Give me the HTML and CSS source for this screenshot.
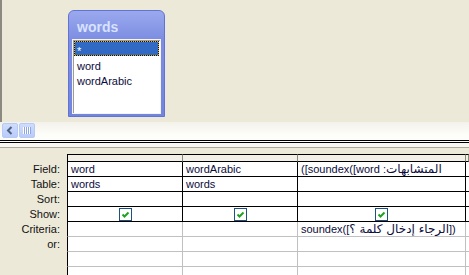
FILE: index.html
```html
<!DOCTYPE html>
<html lang="en">
<head>
  <meta charset="UTF-8" />
  <title>Query Design</title>
  <link rel="stylesheet" href="styles.css">
</head>
<body>

  <div class="tables">
    <div class="fieldlist">
      <div class="fl-title">words</div>
      <ul class="fl-items">
        <li class="sel"><span>*</span></li>
        <li>word</li>
        <li>wordArabic</li>
      </ul>
    </div>
  </div>

  <div class="hscroll">
    <span class="sb-btn">
      <svg width="16" height="15" viewBox="0 0 16 15"><path d="M9.5 4 L6 7.5 L9.5 11" fill="none" stroke="#4d6185" stroke-width="2"/></svg>
    </span>
    <span class="sb-btn">
      <svg width="16" height="15" viewBox="0 0 16 15">
        <path d="M4.5 4v7M6.5 4v7M8.5 4v7M10.5 4v7" stroke="#fff" stroke-width="1"/>
        <path d="M5.5 4v7M7.5 4v7M9.5 4v7M11.5 4v7" stroke="#8da4e6" stroke-width="1"/>
      </svg>
    </span>
  </div>

  <div class="splitter"></div>

  <div class="qbe">
    <div class="lbl"></div>
    <div class="hd first"></div><div class="hd"></div><div class="hd"></div><div class="hd"></div>

    <div class="lbl">Field:</div>
    <div class="c first">word</div><div class="c">wordArabic</div><div class="c">([soundex([word :<span class="ar">المتشابهات</span></div><div class="c"></div>

    <div class="lbl">Table:</div>
    <div class="c first">words</div><div class="c">words</div><div class="c"></div><div class="c"></div>

    <div class="lbl">Sort:</div>
    <div class="c first"></div><div class="c"></div><div class="c"></div><div class="c"></div>

    <div class="lbl">Show:</div>
    <div class="c first chk"><i class="box"></i></div><div class="c chk"><i class="box"></i></div><div class="c chk"><i class="box"></i></div><div class="c"></div>

    <div class="lbl">Criteria:</div>
    <div class="c first soft"></div><div class="c soft"></div><div class="c soft">soundex([<span class="ar">الرجاء إدخال كلمة ؟</span>])</div><div class="c soft"></div>

    <div class="lbl">or:</div>
    <div class="c first soft"></div><div class="c soft"></div><div class="c soft"></div><div class="c soft"></div>

    <div class="lbl"></div>
    <div class="c first soft"></div><div class="c soft"></div><div class="c soft"></div><div class="c soft"></div>

    <div class="lbl"></div>
    <div class="c first soft"></div><div class="c soft"></div><div class="c soft"></div><div class="c soft"></div>
  </div>

</body>
</html>
```

FILE: styles.css
```css
body {
  margin: 0;
  background: #ece9d8;
  font-family: 'Liberation Sans', 'DejaVu Sans', sans-serif;
  font-size: 11px;
  overflow: hidden;
}
.tables {
  position: relative;
  height: 122px;
  border-left: 2px solid #8c8a80;
  box-sizing: border-box;
}
.fieldlist {
  position: absolute;
  left: 66px;
  top: 10px;
  width: 97px;
  height: 107px;
  box-sizing: border-box;
  padding: 8px 3px 2px 3px;
  border: 1px solid #6173d6;
  border-radius: 6px 6px 0 0;
  background: linear-gradient(#9aa9ee, #7d8ee2 28px, #7384dd);
}
.fl-title {
  padding-left: 5px;
  font-weight: bold;
  font-size: 14px;
  line-height: 16px;
  color: #d7e2ff;
  margin-bottom: 4px;
}
.fl-items {
  list-style: none;
  margin: 0;
  padding: 1px;
  height: 75px;
  box-sizing: border-box;
  background: #fff;
  border: 1px solid #f4f4f4;
  box-shadow: inset 1px 1px 0 #9c9c9c;
}
.fl-items li {
  height: 15px;
  box-sizing: border-box;
  padding: 4px 0 0 3px;
  line-height: 12px;
  color: #0c0c3c;
}
.fl-items li.sel {
  padding: 3px 0 0 2px;
  color: #fff;
  border: 1px dotted #111;
  background: linear-gradient(#316ac5, #316ac5) padding-box, #e6b028 border-box;
}
.hscroll {
  height: 18px;
  box-sizing: border-box;
  padding: 1px 2px;
  display: flex;
  gap: 1px;
  background: linear-gradient(#f3f1ea, #fcfcf8 60%, #fefefb);
}
.sb-btn {
  width: 16px;
  height: 15px;
  box-sizing: border-box;
  border: 1px solid #b7c9f5;
  border-radius: 2px;
  background: linear-gradient(#cfdcfc, #b9cbf8);
  display: flex;
}
.sb-btn svg {
  margin: -1px;
}
.splitter {
  height: 14px;
  border-top: 1px solid #000;
  box-sizing: border-box;
  background: linear-gradient(#fff 0 1px, #000 1px 2px, #f7f6f0 2px 6px, #aca899 6px 7px, #ece9d8 7px);
}
.qbe {
  display: grid;
  grid-template-columns: 67px 116px 115px 168px 3px;
}
.lbl {
  text-align: right;
  padding-right: 7px;
  line-height: 14px;
  color: #111;
}
.hd {
  height: 8px;
  box-sizing: border-box;
  background: #f2f0e6;
  border-top: 1px solid #000;
  border-bottom: 1px solid #000;
  border-right: 1px solid #8a8878;
}
.c {
  height: 15px;
  box-sizing: border-box;
  padding-left: 3px;
  line-height: 14px;
  white-space: nowrap;
  overflow: hidden;
  color: #0c0c3c;
  background: #fff;
  border-right: 1px solid #000;
  border-bottom: 1px solid #000;
}
.ar {
  font-family: 'DejaVu Sans', sans-serif;
  font-size: 12px;
  line-height: 13px;
}
.first {
  border-left: 1px solid #000;
}
.c.soft {
  border-bottom-color: #c0c0c0;
  border-right-color: #c0c0c0;
}
.c.first.soft {
  border-left-color: #000;
}
.chk {
  display: flex;
  justify-content: center;
  padding: 1px 0 0 0;
}
.box {
  display: block;
  width: 13px;
  height: 13px;
  box-sizing: border-box;
  border: 1px solid #1c5180;
  background: #fff url("data:image/svg+xml;utf8,<svg xmlns='http://www.w3.org/2000/svg' width='11' height='11'><path d='M2.5 5.5 L4.5 7.5 L8.5 3.5' fill='none' stroke='%2321a121' stroke-width='2'/></svg>") no-repeat;
}
```
